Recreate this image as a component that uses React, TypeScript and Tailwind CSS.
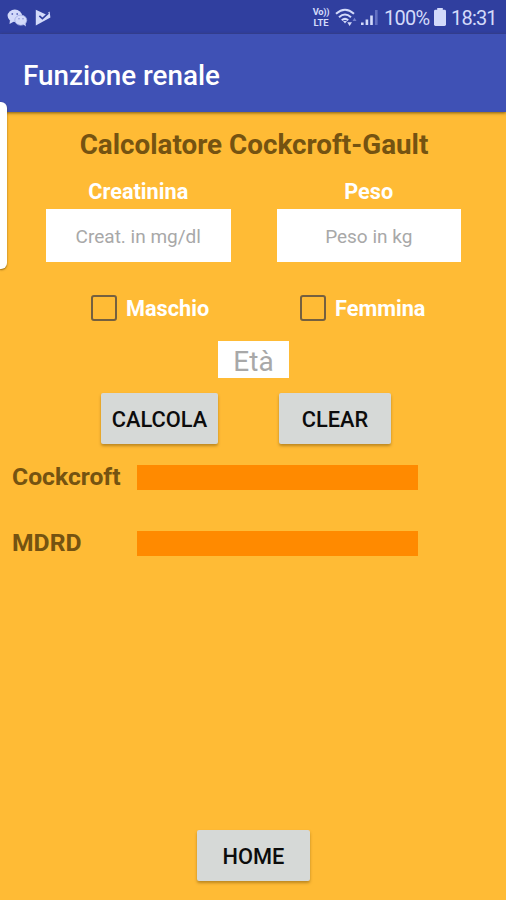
import type { ReactNode } from "react";

const WeChatIcon = () => (
  <svg width="21" height="18" viewBox="0 0 21 18" className="ml-[7px] mt-[1px]">
    <ellipse cx="7.8" cy="6.8" rx="7.2" ry="6.2" fill="#d3dafa" />
    <path d="M3 11 L2.5 15 L7 12.5 Z" fill="#d3dafa" />
    <ellipse cx="13.8" cy="11.2" rx="6" ry="5.1" fill="#d3dafa" stroke="#9aa5e0" strokeWidth="0.7" />
    <path d="M16 15 L18.8 17.4 L18.5 14 Z" fill="#d3dafa" />
    <circle cx="5.3" cy="5" r="0.9" fill="#5d6aba" />
    <circle cx="10.2" cy="5" r="0.9" fill="#5d6aba" />
    <circle cx="12" cy="9.8" r="0.7" fill="#7884ca" />
    <circle cx="16" cy="9.8" r="0.7" fill="#7884ca" />
  </svg>
);

const PlayCheckIcon = () => (
  <svg width="16" height="17" viewBox="0 0 16 17" className="ml-[7px]">
    <path d="M0.8 0.8 L11 5.5 L14.6 2.5 L15.4 8.5 L0.8 16.4 Z" fill="#d3dafa" />
    <path d="M4.4 6.8 L7.4 9.6 L13.4 4.2" fill="none" stroke="#303f9f" strokeWidth="1.7" />
  </svg>
);

const WifiIcon = () => (
  <svg width="23" height="19" viewBox="0 0 23 19" fill="none" stroke="#d3dafa" strokeWidth="2" className="ml-[5px]">
    <path d="M1 5.8 Q10 -2.2 19 5.8" />
    <path d="M4 9.2 Q10 3.8 16 9.2" />
    <path d="M6.8 12.3 Q10 9.4 13.2 12.3" />
    <path d="M8 13 L12 13 L10 15.5 Z" fill="#d3dafa" stroke="none" />
    <path d="M12.3 14.3 L17 14.3 L14.6 18 Z" fill="#d3dafa" stroke="none" />
    <path d="M17.5 13 L19.5 9.8 L21.5 13 Z" fill="#7480cc" stroke="none" />
  </svg>
);

const SignalIcon = () => (
  <svg width="18" height="17" viewBox="0 0 18 17" className="ml-[3px] mt-[1px]">
    <rect x="0" y="13.5" width="2.6" height="2.5" fill="#d3dafa" />
    <rect x="4.6" y="10.5" width="2.6" height="5.5" fill="#d3dafa" />
    <rect x="9.2" y="6.5" width="2.6" height="9.5" fill="#d3dafa" />
    <rect x="14" y="1" width="2.6" height="15" fill="#6370c2" />
  </svg>
);

const BatteryIcon = () => (
  <svg width="12" height="18" viewBox="0 0 12 18" className="ml-[4px]" fill="#d3dafa">
    <rect x="3.2" y="0" width="5.6" height="3" />
    <rect x="0" y="1.8" width="12" height="16.2" rx="1.4" />
  </svg>
);

const StatusBar = () => (
  <div className="flex h-[34px] items-center bg-[#303f9f] text-[#d3dafa]">
    <WeChatIcon />
    <PlayCheckIcon />
    <div className="ml-auto flex w-[18px] flex-col items-center whitespace-nowrap text-[9.4px] font-bold leading-[11px]">
      <span className="tracking-[-0.3px]">Vo))</span>
      <span>LTE</span>
    </div>
    <WifiIcon />
    <SignalIcon />
    <span className="ml-[5px] w-[46px] whitespace-nowrap pt-[2px] text-[20px] tracking-[-0.7px]">100%</span>
    <BatteryIcon />
    <span className="ml-[5px] mr-[9px] w-[46px] whitespace-nowrap pt-[2px] text-[20px] tracking-[-0.8px]">18:31</span>
  </div>
);

const Field = ({ label, placeholder }: { label: string; placeholder: string }) => (
  <label className="flex w-[184.5px] flex-col items-center">
    <span className="h-[30px] text-[21.7px] font-bold leading-[26px] text-white">{label}</span>
    <input
      placeholder={placeholder}
      className="h-[53px] w-full bg-white pt-[2px] text-center text-[19px] outline-none placeholder:text-[#a8a8a8]"
    />
  </label>
);

const Check = ({ label }: { label: string }) => (
  <label className="flex items-center gap-[9px]">
    <input type="checkbox" className="size-[26px] appearance-none rounded-[3px] border-[2.5px] border-[#75603f]" />
    <span className="pt-[2px] text-[21.7px] font-bold leading-[26px] text-white">{label}</span>
  </label>
);

const Button = ({ children, className }: { children: ReactNode; className: string }) => (
  <button
    className={`h-[51px] rounded-[2px] bg-[#d6d9d7] pt-[3px] text-[21.8px] font-medium text-[#0c0c0c] shadow-[0_2px_3px_rgba(90,60,0,0.4)] ${className}`}
  >
    {children}
  </button>
);

const Result = ({ label }: { label: string }) => (
  <div className="flex h-[26px] items-center">
    <span className="w-[125px] text-[24.7px] font-bold leading-[26px] text-[#755311]">{label}</span>
    <div className="h-[25px] w-[281px] bg-[#ff8a00]" />
  </div>
);

const App = () => {
  return (
    <div className="relative flex h-[900px] w-[506px] flex-col overflow-hidden bg-[#ffbb35] font-[Roboto,sans-serif]">
      <StatusBar />
      <header className="flex h-[78px] items-center bg-[#3f51b5] pl-[23px] pt-[5px] shadow-[0_1px_3px_rgba(70,50,0,0.7)]">
        <h1 className="text-[27.8px] font-medium text-white">Funzione renale</h1>
      </header>

      <main className="flex flex-1 flex-col">
        <h2 className="mt-[17px] pl-[2px] text-center text-[27.8px] font-bold leading-[32px] text-[#755311]">
          Calcolatore Cockcroft-Gault
        </h2>

        <div className="ml-[46px] mt-[18px] flex gap-[46px]">
          <Field label="Creatinina" placeholder="Creat. in mg/dl" />
          <Field label="Peso" placeholder="Peso in kg" />
        </div>

        <div className="ml-[91px] mt-[32px] grid grid-cols-[209px_auto]">
          <Check label="Maschio" />
          <Check label="Femmina" />
        </div>

        <input
          placeholder="Età"
          className="ml-[218px] mt-[19px] h-[37px] w-[71px] bg-white pt-[4px] text-center text-[28px] outline-none placeholder:text-[#a8a8a8]"
        />

        <div className="ml-[101px] mt-[15px] flex gap-[61px]">
          <Button className="w-[117px]">CALCOLA</Button>
          <Button className="w-[112px]">CLEAR</Button>
        </div>

        <div className="ml-[12px] mt-[20px] flex flex-col gap-[40px]">
          <Result label="Cockcroft" />
          <Result label="MDRD" />
        </div>

        <Button className="mb-[19px] ml-[197px] mt-auto w-[113px]">HOME</Button>
      </main>

      {/* edge panel handle */}
      <div className="absolute left-0 top-[102px] h-[167px] w-[7px] rounded-r-[6px] bg-white shadow-[0_1px_2px_rgba(70,50,0,0.6)]" />
    </div>
  );
};

export default App;
